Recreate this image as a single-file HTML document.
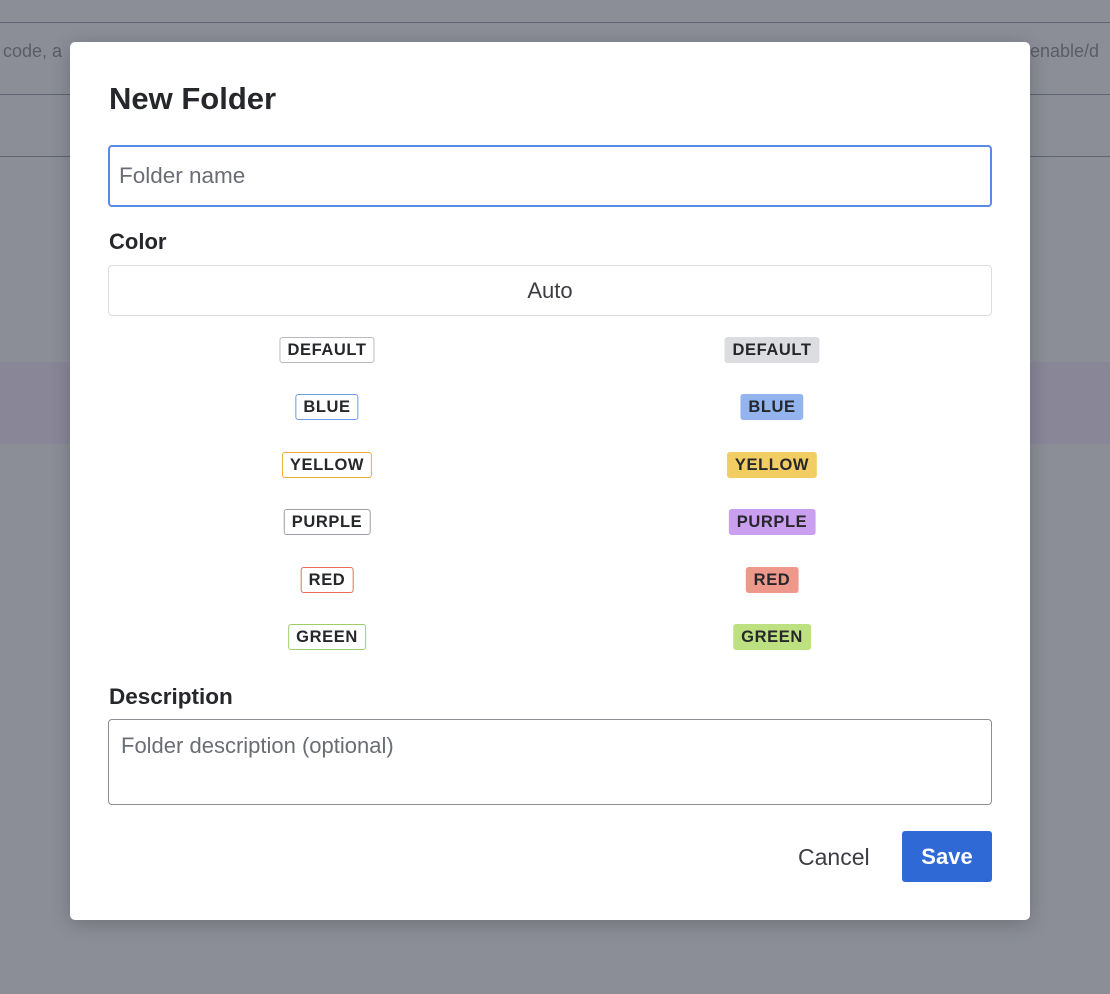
<!DOCTYPE html>
<html><head><meta charset="utf-8"><style>
*{box-sizing:border-box;margin:0;padding:0}
body{width:1110px;height:994px;background:#8b8e97;font-family:"Liberation Sans",Arial,sans-serif;position:relative;overflow:hidden}
.ab{position:absolute}
.line{position:absolute;left:0;width:1110px;height:1px;background:#5f6270}
.bg{color:#5a5d66;font-size:18px}
.modal{position:absolute;left:70px;top:42px;width:960px;height:878px;background:#fff;border-radius:5px;box-shadow:0 4px 20px rgba(0,0,0,.2)}
.badge{position:absolute;height:26px;line-height:24px;font-size:16.5px;font-weight:bold;color:#26272b;border-radius:3px;text-align:center;transform:translate(-50%,-50%);padding:0 7px;border:1px solid #bbb;letter-spacing:.6px}
.f{border-color:transparent}
</style></head><body>
<div class="line" style="top:22px"></div>
<div class="ab bg" style="left:3px;top:41px">code, a</div>
<div class="ab bg" style="left:1030px;top:41px">enable/d</div>
<div class="line" style="top:94px"></div>
<div class="line" style="top:156px"></div>
<div class="ab" style="left:0;top:362px;width:1110px;height:82px;background:#898698"></div>
<div class="modal"></div>
<div class="ab" style="left:109px;top:81px;font-size:31px;font-weight:bold;color:#26272b">New Folder</div>
<div class="ab" style="left:108px;top:145px;width:884px;height:62px;border:2px solid #5b8ae6;border-radius:4px;padding-left:9px;line-height:58px;font-size:22.5px;color:#6b6d75">Folder name</div>
<div class="ab" style="left:109px;top:229px;font-size:22px;font-weight:bold;color:#26272b">Color</div>
<div class="ab" style="left:108px;top:265px;width:884px;height:51px;border:1px solid #ddd;border-radius:4px;text-align:center;line-height:49px;font-size:22px;color:#3c3d42">Auto</div>

<div class="badge" style="left:327px;top:350px;border-color:#b8b9be">DEFAULT</div>
<div class="badge f" style="left:772px;top:350px;background:#dcdde1">DEFAULT</div>
<div class="badge" style="left:327px;top:407px;border-color:#6f9be8">BLUE</div>
<div class="badge f" style="left:772px;top:407px;background:#93b4ef">BLUE</div>
<div class="badge" style="left:327px;top:465px;border-color:#f0aa3c">YELLOW</div>
<div class="badge f" style="left:772px;top:465px;background:#f2cd64">YELLOW</div>
<div class="badge" style="left:327px;top:522px;border-color:#9e9ea6">PURPLE</div>
<div class="badge f" style="left:772px;top:522px;background:#cb9ff0">PURPLE</div>
<div class="badge" style="left:327px;top:580px;border-color:#e86b5e">RED</div>
<div class="badge f" style="left:772px;top:580px;background:#ee978b">RED</div>
<div class="badge" style="left:327px;top:637px;border-color:#9ccf6a">GREEN</div>
<div class="badge f" style="left:772px;top:637px;background:#bde080">GREEN</div>

<div class="ab" style="left:109px;top:684px;font-size:22.5px;font-weight:bold;color:#26272b">Description</div>
<div class="ab" style="left:108px;top:719px;width:884px;height:86px;border:1px solid #8d8e94;border-radius:4px;padding:13px 12px;font-size:22px;color:#6b6d75">Folder description (optional)</div>
<div class="ab" style="left:798px;top:844px;font-size:23px;color:#3c3d42">Cancel</div>
<div class="ab" style="left:902px;top:831px;width:90px;height:51px;background:#2f69d6;border-radius:3px;color:#fff;font-size:22px;font-weight:bold;text-align:center;line-height:51px">Save</div>
</body></html>
